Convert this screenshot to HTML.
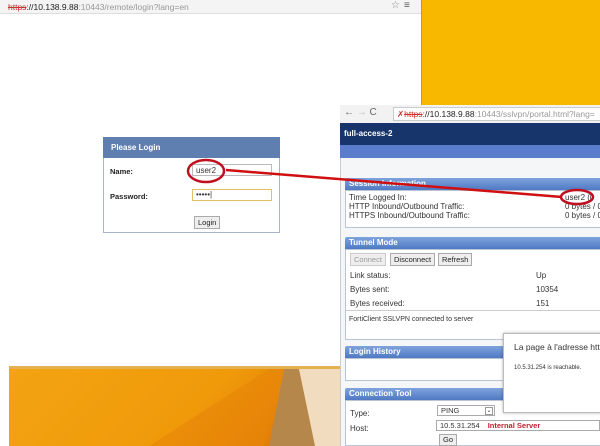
<!DOCTYPE html>
<html><head><meta charset="utf-8"><style>
*{margin:0;padding:0;box-sizing:border-box}
body{width:600px;height:446px;overflow:hidden;position:relative;background:#fff;font-family:"Liberation Sans",Arial,sans-serif;font-size:8px;color:#333}
.a{position:absolute;white-space:nowrap}
.hdr{position:absolute;left:345px;width:260px;height:12px;background:linear-gradient(#7fa3dd,#4f79c4);color:#fff;font-weight:bold;font-size:8px;padding:1px 4px;border-radius:2px 0 0 0}
.box{position:absolute;left:345px;width:260px;border:1px solid #b9c4d4;background:#fff}
.btn{position:absolute;border:1px solid #aaa;background:#eee;font-size:7.5px;padding:1px 3px;color:#222;white-space:nowrap}
</style></head><body>
<div class="a" style="left:0;top:0;width:422px;height:14px;background:#f4f4f4;border-bottom:1px solid #ddd"></div>
<div class="a" style="left:8px;top:2px;font-size:8.5px;color:#222"><span style="color:#c33;text-decoration:line-through">https</span>://10.138.9.88<span style="color:#999">:10443/remote/login?lang=en</span></div>
<div class="a" style="left:391px;top:0px;font-size:10px;color:#888">☆</div>
<div class="a" style="left:404px;top:0px;font-size:10px;color:#555">≡</div>
<div class="a" style="left:421px;top:0;width:179px;height:106px;background:#f8b800;border-left:1px solid #c89a20"></div>
<div class="a" style="left:103px;top:137px;width:177px;height:96px;border:1px solid #a9b5c8;background:#fff"></div>
<div class="a" style="left:103px;top:137px;width:177px;height:21px;background:#5f7fb0;color:#fff;font-weight:bold;font-size:8px;padding:6px 8px">Please Login</div>
<div class="a" style="left:110px;top:167px;font-weight:bold;font-size:7.5px;color:#222">Name:</div>
<div class="a" style="left:110px;top:192px;font-weight:bold;font-size:7.5px;color:#222">Password:</div>
<div class="a" style="left:192px;top:164px;width:80px;height:12px;border:1px solid #bbb;font-size:8px;padding:1px 3px">user2</div>
<div class="a" style="left:192px;top:189px;width:80px;height:12px;border:1px solid #e0c060;font-size:8px;padding:0 3px">•••••|</div>
<div class="btn" style="left:194px;top:216px">Login</div>
<div class="a" style="left:9px;top:366px;width:336px;height:80px;background:linear-gradient(135deg,#f3a412 0%,#f09a0a 55%,#e07a08 85%)"></div>
<div class="a" style="left:9px;top:366px;width:336px;height:3px;background:#e4b050"></div>
<svg class="a" style="left:9px;top:369px" width="336" height="77"><polygon points="275,0 290,0 306,77 260,77" fill="#b5874a"/><polygon points="290,0 336,0 336,77 306,77" fill="#f1dcc0"/><polygon points="140,77 260,0 275,0 255,77" fill="#e88508" opacity=".6"/></svg>
<div class="a" style="left:340px;top:105px;width:260px;height:341px;background:#f5f6f8;border-left:1px solid #ccc"></div>
<div class="a" style="left:340px;top:105px;width:260px;height:18px;background:#f2f2f2"></div>
<div class="a" style="left:344px;top:107px;font-size:10px;color:#666">← <span style="color:#bbb">→</span> C</div>
<div class="a" style="left:393px;top:107px;width:210px;height:14px;border:1px solid #ccc;background:#fff;font-size:8.5px;padding:1px 3px;color:#222;overflow:hidden"><span style="color:#c33">✗</span><span style="color:#c33;text-decoration:line-through">https</span>://10.138.9.88<span style="color:#999">:10443/sslvpn/portal.html?lang=</span></div>
<div class="a" style="left:340px;top:123px;width:260px;height:22px;background:#18356b;color:#fff;font-weight:bold;font-size:8px;padding:6px 4px">full-access-2</div>
<div class="a" style="left:340px;top:145px;width:260px;height:13px;background:#5a7ecb"></div>
<div class="hdr" style="top:178px">Session Information</div>
<div class="box" style="top:190px;height:38px"></div>
<div class="a" style="left:349px;top:193px;line-height:9px">Time Logged In:<br>HTTP Inbound/Outbound Traffic:<br>HTTPS Inbound/Outbound Traffic:</div>
<div class="a" style="left:565px;top:193px;line-height:9px">user2 (0<br>0 bytes / 0<br>0 bytes / 0</div>
<div class="hdr" style="top:237px">Tunnel Mode</div>
<div class="box" style="top:249px;height:91px"></div>
<div class="btn" style="left:350px;top:253px;color:#999;border-color:#ccc">Connect</div>
<div class="btn" style="left:390px;top:253px">Disconnect</div>
<div class="btn" style="left:438px;top:253px">Refresh</div>
<div class="a" style="left:350px;top:269px;line-height:14px">Link status:<br>Bytes sent:<br>Bytes received:</div>
<div class="a" style="left:536px;top:269px;line-height:14px">Up<br>10354<br>151</div>
<div class="a" style="left:346px;top:310px;width:254px;border-top:1px solid #ccc"></div>
<div class="a" style="left:349px;top:316px;font-size:7px">FortiClient SSLVPN connected to server</div>
<div class="hdr" style="top:346px">Login History</div>
<div class="box" style="top:358px;height:23px"></div>
<div class="hdr" style="top:388px">Connection Tool</div>
<div class="box" style="top:400px;height:46px"></div>
<div class="a" style="left:350px;top:406px;line-height:15px">Type:<br>Host:</div>
<div class="a" style="left:437px;top:405px;width:58px;height:11px;border:1px solid #aaa;background:#fff;font-size:7.5px;padding:0 3px">PING<span style="position:absolute;right:1px;top:1px;width:8px;height:8px;border:1px solid #999;font-size:6px;line-height:6px;text-align:center">⌄</span></div>
<div class="a" style="left:436px;top:420px;width:164px;height:11px;border:1px solid #aaa;background:#fff;font-size:7.5px;padding:0 3px">10.5.31.254 <span style="color:#c02030;font-weight:bold;margin-left:6px">Internal Server</span></div>
<div class="btn" style="left:439px;top:434px;padding:0 3px;height:12px">Go</div>
<div class="a" style="left:503px;top:333px;width:100px;height:80px;background:#fff;border:1px solid #bbb;box-shadow:0 0 3px rgba(0,0,0,.3)"></div>
<div class="a" style="left:514px;top:342px;font-size:8.5px;color:#333">La page à l'adresse http</div>
<div class="a" style="left:514px;top:365px;font-size:6px;color:#333">10.5.31.254 is reachable.</div>
<svg class="a" style="left:0;top:0" width="600" height="446">
<line x1="226" y1="170" x2="562" y2="197" stroke="#d01010" stroke-width="2.5"/>
<ellipse cx="206" cy="171" rx="18" ry="11" fill="none" stroke="#c01020" stroke-width="2.5"/>
<ellipse cx="577" cy="197" rx="16" ry="7" fill="none" stroke="#c01020" stroke-width="2.5"/>
</svg>
</body></html>
